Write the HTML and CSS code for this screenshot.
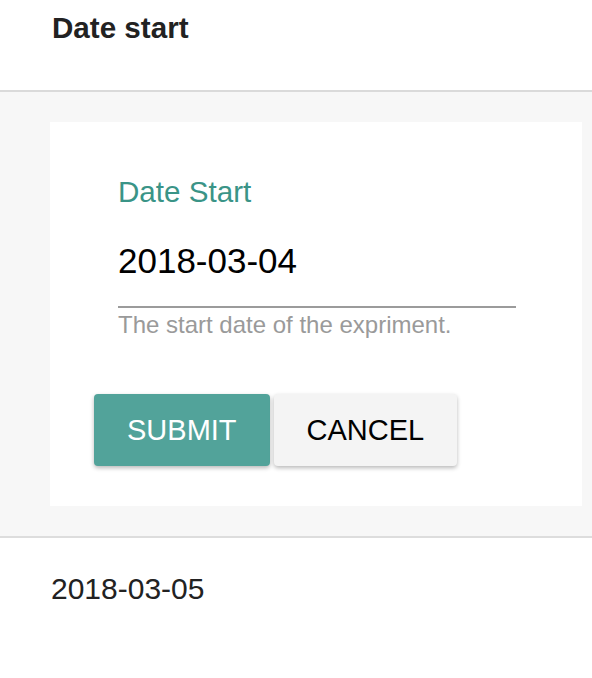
FILE: index.html
```html
<!DOCTYPE html>
<html>
<head>
<meta charset="utf-8">
<link rel="stylesheet" href="styles.css">
</head>
<body>
  <div class="header">
    <h1 class="title">Date start</h1>
  </div>
  <div class="panel">
    <div class="card">
      <div class="field">
        <div class="label">Date Start</div>
        <div class="value">2018-03-04</div>
        <div class="helper">The start date of the expriment.</div>
      </div>
      <div class="actions">
        <button class="btn btn-primary">SUBMIT</button>
        <button class="btn btn-default">CANCEL</button>
      </div>
    </div>
  </div>
  <div class="row">2018-03-05</div>
</body>
</html>
```

FILE: styles.css
```css
* { box-sizing: border-box; }
html, body {
  margin: 0;
  padding: 0;
  background: #fff;
  font-family: "Liberation Sans", Arial, sans-serif;
}
.header {
  height: 92px;
  padding: 11px 0 0 52px;
  border-bottom: 2px solid #dadada;
}
.title {
  margin: 0;
  font-size: 29.6px;
  line-height: 34px;
  font-weight: bold;
  color: #222;
}
.panel {
  background: #f7f7f7;
  padding: 30px 10px 30px 50px;
  border-bottom: 2px solid #dddddd;
}
.card {
  background: #fff;
  padding: 54px 66px 40px 44px;
}
.field {
  margin-left: 24px;
}
.label {
  font-size: 29.6px;
  line-height: 32px;
  color: #3a9487;
}
.value {
  margin-top: 33px;
  font-size: 35px;
  line-height: 40px;
  color: #000;
  padding-bottom: 25px;
  border-bottom: 2px solid #9b9b9b;
}
.helper {
  margin-top: 3px;
  font-size: 24px;
  line-height: 28px;
  color: #9a9a9a;
}
.actions {
  display: flex;
  gap: 4px;
  margin-top: 55px;
}
.btn {
  height: 72px;
  padding: 0 33px;
  border: none;
  border-radius: 4px;
  font-family: "Liberation Sans", Arial, sans-serif;
  font-size: 29px;
  box-shadow: 0 2px 4px rgba(0, 0, 0, 0.28);
}
.btn-primary {
  background: #52a39a;
  color: #fff;
}
.btn-default {
  background: #f4f4f4;
  color: #000;
}
.row {
  padding: 34px 0 0 51px;
  font-size: 30px;
  line-height: 34px;
  color: #222;
}
```
